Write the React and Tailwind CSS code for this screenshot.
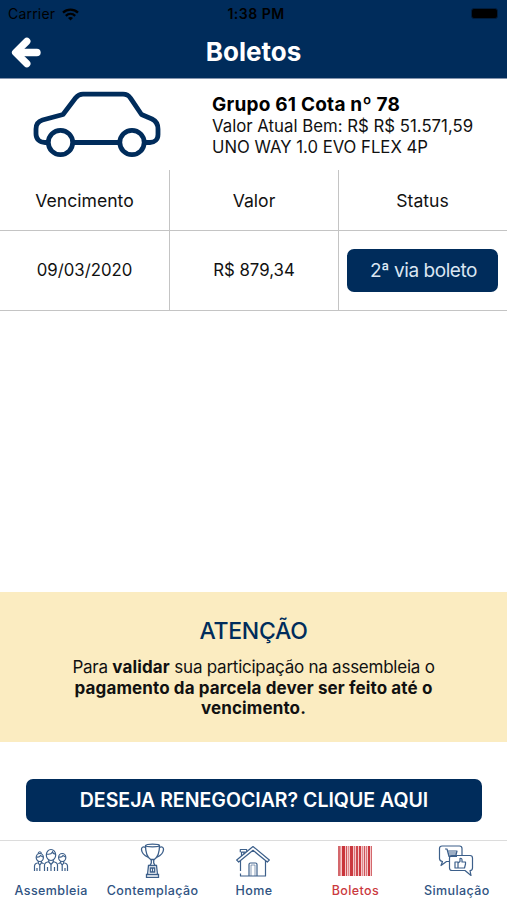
import React from 'react';

const StatusBar = () => (
    <div className="h-7 flex items-center justify-between pl-[8px] pr-[9px] text-black text-[14px] leading-none">
        <div className="flex-1 flex items-center gap-[7px]">
            <span className="tracking-[0.2px]">Carrier</span>
            <svg className="w-[17px] h-[13px]" viewBox="0 0 17 13" fill="none" stroke="#000" strokeWidth="2.3">
                <path d="M1 4.6C5.2.6 11.8.6 16 4.6" />
                <path d="M3.8 7.8c2.7-2.5 6.7-2.5 9.4 0" />
                <path d="M8.5 12.4 6 9.9c1.4-1.2 3.6-1.2 5 0z" fill="#000" stroke="none" />
            </svg>
        </div>
        <span className="pl-[6px] font-semibold tracking-[0.5px]">1:38 PM</span>
        <div className="flex-1 flex justify-end">
            <div className="w-[27px] h-[11px] -mt-px rounded-[3px] border border-[#001c3c] bg-black" />
        </div>
    </div>
);

const Header = () => (
    <header className="h-[79px] shrink-0 bg-[#002c5b] border-b border-[#8494ad]">
        <StatusBar />
        <div className="h-[48px] flex items-center px-[11px]">
            <svg className="w-[30px] h-[31px]" viewBox="0 0 29 30" fill="none" stroke="#fff" strokeLinecap="round" strokeLinejoin="round">
                <path d="M15.3 4.2 4.4 15l10.9 10.8" strokeWidth="7" />
                <path d="M7 15h18" strokeWidth="7.4" />
            </svg>
            <h1 className="flex-1 pr-[30px] pb-[2px] text-center text-white text-[26px] font-bold">Boletos</h1>
        </div>
    </header>
);

const CarIcon = () => (
    <svg className="w-[130px] h-[68px]" viewBox="0 0 130 68" fill="none" stroke="#002c5b" strokeWidth="4.8" strokeLinejoin="round">
        <path d="M16 52.5H13C7.500 52.500 4 49 4 44V39Q4 32 10.500 30L31 24.500 43.500 8Q46.500 4.200 51 4.200H91Q96 4.200 98.500 8.200L109.500 24.500 120 29Q126 32 126 39v5.500c0 5-3.500 8-8 8H113" />
        <path d="M41 52.5H87" />
        <circle cx="28.500" cy="52.500" r="12.200" />
        <circle cx="100" cy="52.500" r="12.200" />
    </svg>
);

const AssembleiaIcon = () => (
    <svg className="w-[36px] h-[36px]" viewBox="0 0 36 36" fill="none" stroke="#3c5f8a" strokeWidth="1.2">
        <ellipse cx="18" cy="12" rx="4.700" ry="5.500" />
        <path d="M13.500 11q4.500 1 6-2 .5 2 3.200 2M15.800 17v2l2.200 2.500 2.200-2.500v-2M11.500 28v-6q0-2.500 4.500-3.500M24.500 28v-6q0-2.500-4.500-3.500M18 21.500v6.500M14.500 24v4M21.500 24v4" />
        <ellipse cx="6.800" cy="14.500" rx="3.600" ry="4" />
        <path d="M3.500 14q3 .5 4-1.500l2.500 1.500M5 10.500q1.800-3.500 3.600 0M5.300 18v2l1.500 2 1.500-2v-2M1.500 28v-5q0-2.500 4-3.500M10.500 21q-.5-1-2.200-1.500M6.800 22v6M4 25v3" />
        <ellipse cx="29.200" cy="14.500" rx="3.600" ry="4" />
        <path d="M26 14q3 .5 4-1.500l2.500 1.500M27.700 18v2l1.500 2 1.500-2v-2M34.500 28v-5q0-2.500-4-3.500M25.500 21q.5-1 2.200-1.500M29.200 22v6M32 25v3" />
    </svg>
);

const ContemplacaoIcon = () => (
    <svg className="w-[36px] h-[36px]" viewBox="0 0 36 36" fill="none" stroke="#3c5f8a" strokeWidth="1.3">
        <ellipse cx="18.500" cy="2.500" rx="7" ry="1.300" />
        <path d="M11.500 2.500c0 7 1.500 11.500 5.200 14h3.600c3.700-2.500 5.200-7 5.200-14" />
        <path d="M11.700 4.500C9 3.300 7.200 4.200 7.500 6.800c.4 3.400 2.800 5.900 6.500 7.400M25.300 4.500c2.700-1.200 4.500-.3 4.200 2.300-.4 3.400-2.800 5.900-6.500 7.400" />
        <path d="M17.300 16.500v3.500l-1.500 2.500M19.700 16.500v3.500l1.500 2.500M14.500 22.500h8l1 9h-10zM12.500 34.300v-2.800h12v2.800z" />
        <path d="M16.300 25h4.400v4h-4.400zM18.500 25v4" />
    </svg>
);

const HomeIcon = () => (
    <svg className="w-[36px] h-[36px]" viewBox="0 0 36 36" fill="none" stroke="#3c5f8a" strokeWidth="1.2" strokeLinejoin="round">
        <path d="M18 3.500 1.700 17l2 2L18 7.300 32.300 19l2-2z" />
        <path d="M5.300 9.200V6.500h6.400v2.300M6.500 13V9.200h4.300M9 9.200v2" />
        <path d="M5.500 18v10M5.500 30.500V33H14V21.500q0-1.500 1.500-1.500h5q1.500 0 1.500 1.500V33h8.500V18M14 33h8" />
        <path d="M16 33V22h4v11" strokeWidth=".6" />
    </svg>
);

// x offset, width and colour of each bar
const bars = [
    [1, 2, '#d4686c'], [3, 1, '#e79c9e'], [5, 3, '#c9343a'], [9, 1, '#cf5257'],
    [11, 1, '#e08b8e'], [13, 3, '#ca383e'], [17, 1, '#d8757a'], [19, 2, '#cf484d'],
    [22, 2, '#cb3c41'], [25, 1, '#e08b8e'], [27, 1, '#cf5257'], [29, 1, '#d8757a'],
    [31, 2, '#c9343a'], [34, 1, '#d4686c'],
];

const BoletosIcon = () => (
    <svg className="w-[36px] h-[36px]" viewBox="0 0 36 36">
        <rect x="1" y="3" width="34" height="30" fill="#f4c9cb" />
        {bars.map(([x, width, color]) => (
            <rect key={x} x={x} y="3" width={width} height="30" fill={color} />
        ))}
    </svg>
);

const SimulacaoIcon = () => (
    <svg className="w-[36px] h-[36px]" viewBox="0 0 36 36" fill="none" stroke="#3c5f8a" strokeWidth="1.2" strokeLinejoin="round">
        <path d="M12 18.500H8.500L3 22.500l1.500-4Q1.500 18 1.500 15.500V5.500Q1.500 3 4 3h17.500Q24 3 24 5.500V12" />
        <path d="M7 6h2l2 7.500h8M9.500 8H19l-1 4h-7.300M10 10h8.500" />
        <path d="M14 12.500h18q2.500 0 2.500 2.500v10q0 2.500-2.500 2.500l1 5-6-5H14q-2.500 0-2.500-2.500V15q0-2.500 2.500-2.500z" />
        <path d="M17 19h3v6h-3zM20 20l2-1.500v-3q2-.5 2 1.500v2h3.500v2l-1 4H20" />
    </svg>
);

const tabs = [
    { label: 'Assembleia', icon: AssembleiaIcon },
    { label: 'Contemplação', icon: ContemplacaoIcon },
    { label: 'Home', icon: HomeIcon },
    { label: 'Boletos', icon: BoletosIcon, active: true },
    { label: 'Simulação', icon: SimulacaoIcon },
];

const TabBar = () => (
    <nav className="h-[60px] shrink-0 grid grid-cols-5 border-t border-[#dcdcdc] bg-white">
        {tabs.map(({ label, icon: Icon, active }) => (
            <div key={label} className="flex flex-col items-center pt-[2px]">
                <Icon />
                <span className={`mt-[4px] pl-px text-[12.5px] leading-[16px] font-medium tracking-[0.4px] ${active ? 'text-[#cb3a3f]' : 'text-[#2f5382]'}`}>
                    {label}
                </span>
            </div>
        ))}
    </nav>
);

const App = () => {
    return (
        <div className="w-[507px] h-[900px] flex flex-col overflow-hidden bg-white text-[#111] font-['Inter','Liberation_Sans',sans-serif]">
            <Header />

            <section className="h-[91px] shrink-0 flex">
                <div className="w-[212px] pl-[32px] pt-[11px]">
                    <CarIcon />
                </div>
                <div className="pt-[15px]">
                    <h2 className="text-[19px] leading-[22px] font-bold tracking-[0.22px] text-black">Grupo 61 Cota nº 78</h2>
                    <p className="text-[16.8px] leading-[21px]">Valor Atual Bem: R$ R$ 51.571,59</p>
                    <p className="text-[16.7px] leading-[21px]">UNO WAY 1.0 EVO FLEX 4P</p>
                </div>
            </section>

            <section className="shrink-0 text-center">
                <div className="h-[61px] grid grid-cols-[170px_169px_168px] border-b border-[#c4c4c4] text-[17.6px]">
                    <div className="flex items-center justify-center border-r border-[#c4c4c4] pt-[2px]">Vencimento</div>
                    <div className="flex items-center justify-center border-r border-[#c4c4c4] pt-[2px]">Valor</div>
                    <div className="flex items-center justify-center pt-[2px] pr-px">Status</div>
                </div>
                <div className="h-[80px] grid grid-cols-[170px_169px_168px] border-b border-[#c4c4c4] text-[16.8px]">
                    <div className="flex items-center justify-center border-r border-[#c4c4c4]">09/03/2020</div>
                    <div className="flex items-center justify-center border-r border-[#c4c4c4]">R$ 879,34</div>
                    <div className="flex items-center justify-center pr-px">
                        <button className="w-[151px] h-[43px] pt-px pl-[2px] rounded-[7px] bg-[#002c5b] text-[#dbe6f2] text-[19px] tracking-[-0.45px]">2ª via boleto</button>
                    </div>
                </div>
            </section>

            <div className="flex-1" />

            <section className="h-[150px] shrink-0 pt-[24px] bg-[#fbecc1] text-center">
                <h3 className="text-[23px] leading-[30px] font-medium tracking-[-0.3px] text-[#002c5b]">ATENÇÃO</h3>
                <p className="mt-[11px] text-[17px] leading-[20.5px] tracking-[-0.24px]">
                    Para <b className="tracking-[0.12px]">validar</b> sua participação na assembleia o
                    <br />
                    <b className="tracking-[0.12px]">pagamento da parcela dever ser feito até o</b>
                    <br />
                    <b className="tracking-[0.12px]">vencimento.</b>
                </p>
            </section>

            <div className="h-[98px] shrink-0 px-[26px] pt-[37px]">
                <button className="w-[456px] h-[43px] rounded-[7px] bg-[#002c5b] text-white text-[19.5px] font-semibold">
                    DESEJA RENEGOCIAR? CLIQUE AQUI
                </button>
            </div>

            <TabBar />
        </div>
    );
};

export default App;
